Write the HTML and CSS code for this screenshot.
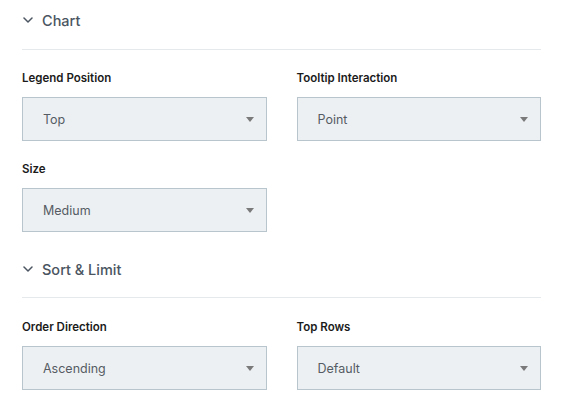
FILE: index.html
```html
<!DOCTYPE html>
<html>
<head>
<meta charset="utf-8">
<link rel="stylesheet" href="styles.css">
</head>
<body>
<div class="panel">
  <section class="section">
    <div class="section-header">
      <svg class="chevron" width="10" height="6" viewBox="0 0 10 6"><path d="M1 1l4 4 4-4" fill="none" stroke="#4a5561" stroke-width="1.5" stroke-linecap="round" stroke-linejoin="round"/></svg>
      <span class="section-title">Chart</span>
    </div>
    <div class="divider"></div>
    <div class="fields">
      <div class="field">
        <div class="label">Legend Position</div>
        <div class="select"><span>Top</span><span class="caret"></span></div>
      </div>
      <div class="field">
        <div class="label">Tooltip Interaction</div>
        <div class="select"><span>Point</span><span class="caret"></span></div>
      </div>
      <div class="field">
        <div class="label">Size</div>
        <div class="select"><span>Medium</span><span class="caret"></span></div>
      </div>
    </div>
  </section>
  <section class="section second">
    <div class="section-header">
      <svg class="chevron" width="10" height="6" viewBox="0 0 10 6"><path d="M1 1l4 4 4-4" fill="none" stroke="#4a5561" stroke-width="1.5" stroke-linecap="round" stroke-linejoin="round"/></svg>
      <span class="section-title">Sort &amp; Limit</span>
    </div>
    <div class="divider"></div>
    <div class="fields">
      <div class="field">
        <div class="label">Order Direction</div>
        <div class="select"><span>Ascending</span><span class="caret"></span></div>
      </div>
      <div class="field">
        <div class="label">Top Rows</div>
        <div class="select"><span>Default</span><span class="caret"></span></div>
      </div>
    </div>
  </section>
</div>
</body>
</html>
```
FILE: styles.css
```css
html, body {
  margin: 0;
  padding: 0;
  background: #ffffff;
}
body {
  font-family: Inter, "Noto Sans", sans-serif;
}
.panel {
  padding: 0 33px 0 22px;
}
.section-header {
  height: 40px;
  display: flex;
  align-items: center;
  gap: 9px;
  padding-left: 1px;
}
.chevron {
  display: block;
}
.section-title {
  font-size: 14.5px;
  font-weight: 500;
  color: #4a5561;
}
.divider {
  margin-top: 9px;
  border-top: 1px solid #e6e9ec;
}
.second {
  margin-top: 17px;
}
.second .divider {
  margin-top: 8px;
}
.fields {
  display: grid;
  grid-template-columns: 1fr 1fr;
  column-gap: 30px;
  row-gap: 20px;
  padding-top: 20px;
}
.second .fields {
  padding-top: 21px;
}
.label {
  font-size: 11.5px;
  font-weight: 600;
  line-height: 16px;
  color: #1b1b1b;
  margin-bottom: 11px;
}
.select {
  box-sizing: border-box;
  height: 44px;
  background: #edf0f3;
  border: 1px solid #b9c5cd;
  display: flex;
  align-items: center;
  justify-content: space-between;
  padding: 0 12px 0 20px;
  font-size: 12.5px;
  color: #555c63;
}
.caret {
  width: 0;
  height: 0;
  border-left: 4px solid transparent;
  border-right: 4px solid transparent;
  border-top: 5px solid #7a7a7a;
}
```
